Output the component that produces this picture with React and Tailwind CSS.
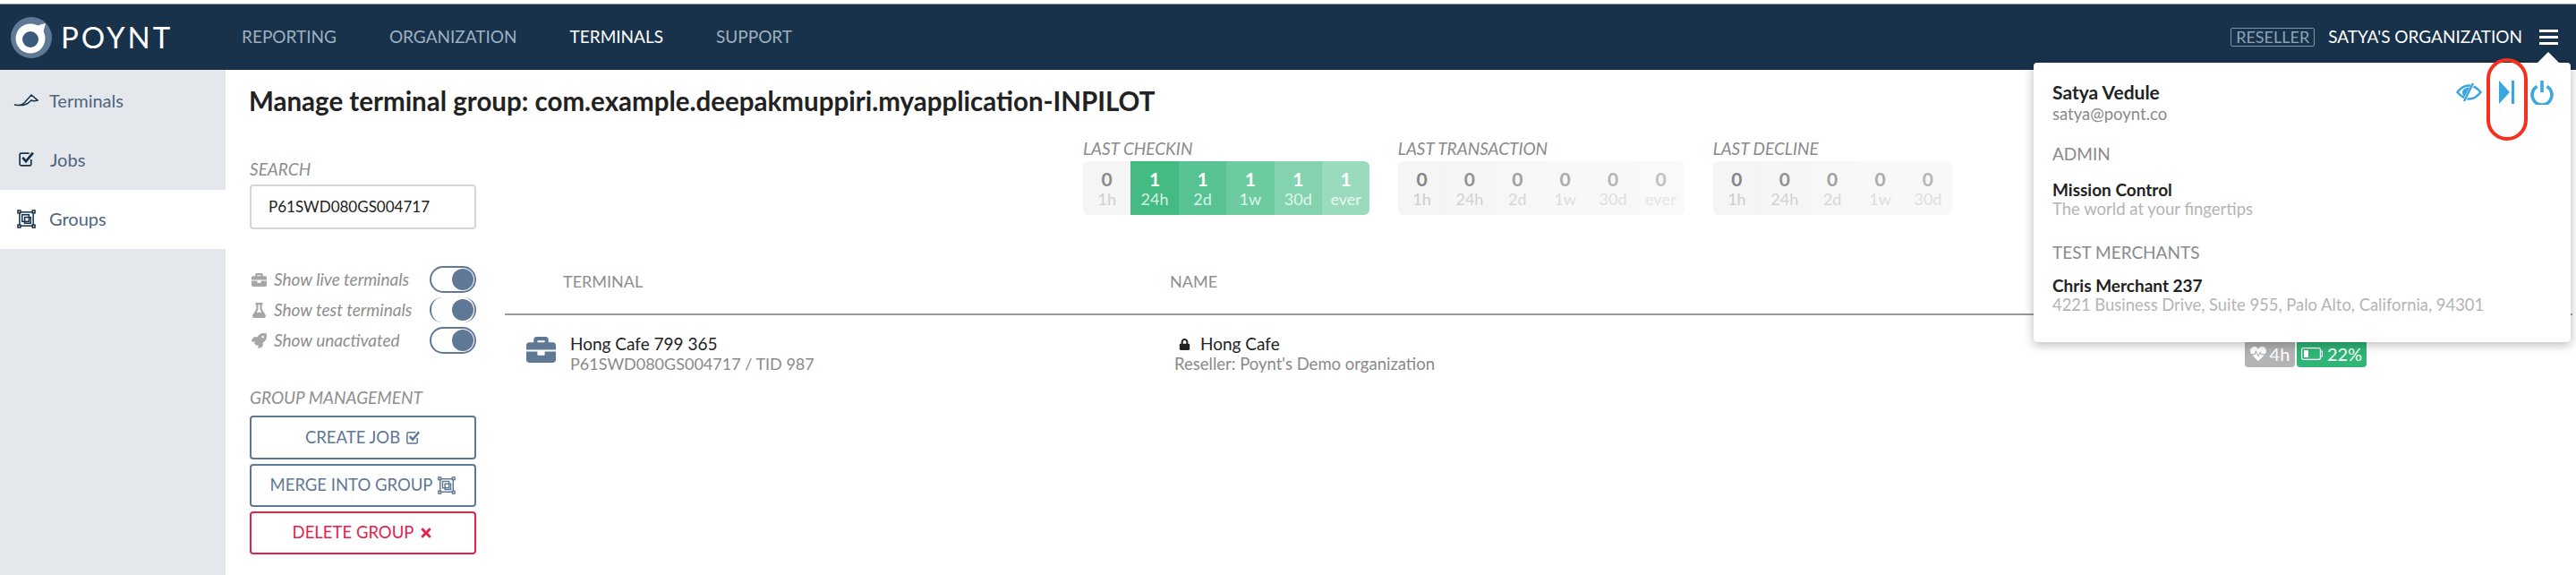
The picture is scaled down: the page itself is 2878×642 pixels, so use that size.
import React from "react";
import { FaBriefcase, FaFlask, FaRocket, FaTimes, FaLock, FaHeartbeat } from "react-icons/fa";

const font = "font-['Lato','Noto_Sans',sans-serif]";

function Logo() {
  return (
    <svg width="46" height="46" viewBox="0 0 46 46" className="shrink-0">
      <circle cx="23" cy="23" r="23" fill="#5f7896" />
      <circle cx="22" cy="24" r="16.5" fill="#ffffff" />
      <path d="M28 10 L39 7 L36 18 Z" fill="#ffffff" />
      <circle cx="22" cy="25" r="9" fill="#3a5a7c" />
    </svg>
  );
}

function GroupIcon({ size = 21, color = "#17324a" }) {
  return (
    <svg width={size} height={size} viewBox="0 0 22 22" fill="none" stroke={color} strokeWidth="1.6">
      <rect x="3" y="3" width="16" height="16" />
      <rect x="6" y="6" width="8" height="8" />
      <rect x="9" y="9" width="7" height="7" />
      <rect x="1" y="1" width="3" height="3" fill="#fff" />
      <rect x="18" y="1" width="3" height="3" fill="#fff" />
      <rect x="1" y="18" width="3" height="3" fill="#fff" />
      <rect x="18" y="18" width="3" height="3" fill="#fff" />
    </svg>
  );
}

function CheckIcon({ size = 18, color = "#17324a" }) {
  return (
    <svg width={size} height={size} viewBox="0 0 18 18" fill="none" stroke={color}>
      <path d="M14 9.5 V14.5 A1.5 1.5 0 0 1 12.5 16 H3.5 A1.5 1.5 0 0 1 2 14.5 V4.5 A1.5 1.5 0 0 1 3.5 3 H12" strokeWidth="1.6" />
      <path d="M5 7.5 L8.5 11.5 L16 2.5" strokeWidth="2.6" />
    </svg>
  );
}

function PenIcon() {
  return (
    <svg width="28" height="16" viewBox="0 0 28 16" fill="none" stroke="#17324a" strokeWidth="1.5">
      <path d="M1 13 C6 14 9 14 12 11 L20 2 L27 8 C24 9 22 9 20 8 C16 12 12 15 1 13 Z" />
    </svg>
  );
}

function EyeIcon() {
  return (
    <svg width="29" height="22" viewBox="0 0 29 22" fill="none" stroke="#3aa7df">
      <path d="M1.5 11 C6 5 10 3.5 14.5 3.5 C19 3.5 23.5 6 27.5 11 C23.5 16 19 18.5 14.5 18.5 C10 18.5 6 16 1.5 11 Z" strokeWidth="2.6" />
      <path d="M7 11 C7 7.5 11 5.5 16 5.5 L10 17 C8 15.5 7 13.5 7 11 Z" fill="#3aa7df" stroke="none" />
      <path d="M19.5 1 L9 21" strokeWidth="3.5" stroke="#ffffff" />
      <path d="M19 1 L9 21" strokeWidth="2.4" />
    </svg>
  );
}

function SkipIcon() {
  return (
    <svg width="17" height="26" viewBox="0 0 17 26" fill="#3aa7df">
      <path d="M0 0 L12 13 L0 26 Z" />
      <rect x="14" y="0" width="3" height="26" />
    </svg>
  );
}

function PowerIcon() {
  return (
    <svg width="26" height="27" viewBox="0 0 26 27" fill="none" stroke="#3aa7df" strokeWidth="3.6">
      <path d="M7.5 6.5 A 11 11 0 1 0 18.5 6.5" />
      <path d="M13 0 V13" />
    </svg>
  );
}

function BatteryIcon() {
  return (
    <svg width="24" height="14" viewBox="0 0 24 14" fill="none" stroke="#ffffff" strokeWidth="1.2">
      <rect x="0.6" y="0.6" width="20.8" height="12.8" rx="2" />
      <rect x="3" y="3" width="5" height="8" fill="#ffffff" stroke="none" />
      <path d="M21.5 4 H23.4 V10 H21.5" />
    </svg>
  );
}

function Toggle({ thin }) {
  return (
    <div
      className={
        thin
          ? "w-[52px] h-[28px] rounded-full border-x-2 border-y-0 border-x-[#5f7896] flex items-center justify-end pr-[1px]"
          : "w-[52px] h-[30px] rounded-full border-2 border-[#5f7896] flex items-center justify-end pr-[1px]"
      }
    >
      <div className="w-[24px] h-[24px] rounded-full bg-[#5f7896]" />
    </div>
  );
}

function ToggleRow({ icon, label, thin }) {
  return (
    <div className="flex items-center h-[34px]">
      <div className="w-[27px] flex justify-start pl-[2px] text-[#a6a6a6]">{icon}</div>
      <div className="flex-1 italic text-[19px] text-[#8e8e8e] whitespace-nowrap">{label}</div>
      <Toggle thin={thin} />
    </div>
  );
}

function Stat({ title, cells }) {
  return (
    <div>
      <div className="italic text-[19px] text-[#8a8a8a] h-[24px] leading-[24px] whitespace-nowrap">{title}</div>
      <div className="flex h-[60px] rounded-[6px] overflow-hidden mt-[2px]">
        {cells.map((c) => (
          <div key={c.label} className={`w-[53.4px] flex flex-col items-center justify-center ${c.bg}`}>
            <div className={`text-[21px] font-bold leading-[25px] ${c.num}`}>{c.value}</div>
            <div className={`text-[18px] leading-[21px] ${c.sub}`}>{c.label}</div>
          </div>
        ))}
      </div>
    </div>
  );
}

const checkin = [
  { label: "1h", value: 0, bg: "bg-[#f5f5f5]", num: "text-[#8a8a8a]", sub: "text-[#cfcfcf]" },
  { label: "24h", value: 1, bg: "bg-[#43bb83]", num: "text-white", sub: "text-[#d5f1e3]" },
  { label: "2d", value: 1, bg: "bg-[#58c392]", num: "text-white", sub: "text-[#d9f3e6]" },
  { label: "1w", value: 1, bg: "bg-[#6dcba0]", num: "text-white", sub: "text-[#def5ea]" },
  { label: "30d", value: 1, bg: "bg-[#82d3ae]", num: "text-white", sub: "text-[#e3f6ed]" },
  { label: "ever", value: 1, bg: "bg-[#99dbbc]", num: "text-white", sub: "text-[#e8f8f0]" },
];

const grey = [
  { label: "1h", value: 0, bg: "bg-[#f5f5f5]", num: "text-[#858585]", sub: "text-[#cdcdcd]" },
  { label: "24h", value: 0, bg: "bg-[#f6f6f6]", num: "text-[#939393]", sub: "text-[#d2d2d2]" },
  { label: "2d", value: 0, bg: "bg-[#f7f7f7]", num: "text-[#a0a0a0]", sub: "text-[#d8d8d8]" },
  { label: "1w", value: 0, bg: "bg-[#f8f8f8]", num: "text-[#ababab]", sub: "text-[#dddddd]" },
  { label: "30d", value: 0, bg: "bg-[#f8f8f8]", num: "text-[#b5b5b5]", sub: "text-[#e0e0e0]" },
  { label: "ever", value: 0, bg: "bg-[#f9f9f9]", num: "text-[#c0c0c0]", sub: "text-[#e5e5e5]" },
];

function UserMenu() {
  return (
    <div className="absolute left-[2272px] top-[70px] w-[600px] h-[312px] bg-white rounded-[4px] shadow-[0_3px_12px_rgba(0,0,0,0.28)] pl-[21px] pr-[19px] pt-[21px] z-10">
      <div className="absolute right-[13px] top-[-12px] w-0 h-0 border-x-[12px] border-x-transparent border-b-[12px] border-b-white" />
      <div className="flex items-center justify-between h-[24px]">
        <div className="text-[21px] font-bold text-[#222222] leading-[24px]">Satya Vedule</div>
        <div className="flex items-center">
          <EyeIcon />
          <div className="ml-[19px]"><SkipIcon /></div>
          <div className="ml-[18px]"><PowerIcon /></div>
        </div>
      </div>
      <div className="text-[18.5px] text-[#8a8a8a] leading-[24px]">satya@poynt.co</div>
      <div className="mt-[21px] text-[19px] text-[#8a8a8a] leading-[24px]">ADMIN</div>
      <div className="mt-[17px] text-[19px] font-bold text-[#222222] leading-[21px]">Mission Control</div>
      <div className="text-[18.5px] text-[#b4b4b4] leading-[22px]">The world at your fingertips</div>
      <div className="mt-[26px] text-[19px] text-[#8a8a8a] leading-[24px]">TEST MERCHANTS</div>
      <div className="mt-[14px] text-[19px] font-bold text-[#222222] leading-[21px]">Chris Merchant 237</div>
      <div className="text-[18.4px] text-[#b4b4b4] leading-[22px] whitespace-nowrap">4221 Business Drive, Suite 955, Palo Alto, California, 94301</div>
      <div className="absolute left-[506px] top-[-5px] w-[46px] h-[92px] rounded-full border-[4px] border-[#f5301e]" />
    </div>
  );
}

export default function App() {
  return (
    <div className={`${font} w-[2878px] h-[642px] overflow-hidden bg-white flex flex-col relative`}>
      <div className="h-[5px] bg-white border-b border-[#9a9a9a] shrink-0" />
      <header className="h-[73px] shrink-0 bg-[#17324a] flex items-center pl-[12px] pr-[20px]">
        <Logo />
        <div className="ml-[10px] w-[202px] text-[33px] leading-none text-white tracking-[3px]">POYNT</div>
        <nav className="flex gap-[59px] text-[19px] text-[#9fb0bf]">
          <span>REPORTING</span>
          <span>ORGANIZATION</span>
          <span className="text-white">TERMINALS</span>
          <span>SUPPORT</span>
        </nav>
        <div className="ml-auto flex items-center text-[19px]">
          <span className="w-[94px] h-[21px] flex items-center justify-center border border-[#7d93a8] text-[#8ea2b5] rounded-[2px] text-[18px]">RESELLER</span>
          <span className="ml-[15px] text-white">SATYA'S ORGANIZATION</span>
          <div className="ml-[19px] flex flex-col gap-[4px] w-[21px]">
            <div className="h-[3px] bg-white" />
            <div className="h-[3px] bg-white" />
            <div className="h-[3px] bg-white" />
          </div>
        </div>
      </header>

      <div className="flex flex-1">
        <aside className="w-[252px] shrink-0 bg-[#e4e7eb] text-[20px] text-[#4d6580]">
          <div className="h-[68px] flex items-center pl-[15px] gap-[12px]"><PenIcon /><span>Terminals</span></div>
          <div className="h-[66px] flex items-center pl-[20px] gap-[17px] pb-[3px]"><CheckIcon size={19} /><span>Jobs</span></div>
          <div className="h-[66px] flex items-center pl-[19px] gap-[15px] bg-white pb-[2px]"><GroupIcon /><span>Groups</span></div>
        </aside>

        <main className="flex-1 pl-[27px] pr-[4px]">
          <h1 className="h-[70px] -ml-[1px] flex items-center text-[29.5px] font-bold text-[#222222] whitespace-nowrap">Manage terminal group: com.example.deepakmuppiri.myapplication-INPILOT</h1>
          <div className="flex">
            <div className="w-[253px] shrink-0">
              <div className="italic text-[19px] text-[#8e8e8e] mt-[27px] h-[31px]">SEARCH</div>
              <div className="h-[50px] border-2 border-[#d6d6d6] rounded-[4px] flex items-center pl-[19px] text-[17px] text-[#222]">P61SWD080GS004717</div>
              <div className="mt-[39px]">
                <ToggleRow icon={<FaBriefcase size={17} />} label="Show live terminals" />
                <ToggleRow icon={<FaFlask size={17} />} label="Show test terminals" thin />
                <ToggleRow icon={<FaRocket size={17} />} label="Show unactivated" />
              </div>
              <div className="italic text-[19px] text-[#8e8e8e] mt-[33px] h-[31px] whitespace-nowrap">GROUP MANAGEMENT</div>
              <div className="flex flex-col gap-[5px] mt-[3px] text-[18.5px]">
                <button className="h-[49px] border-2 border-[#5f7896] rounded-[4px] text-[#5f7896] flex items-center justify-center gap-[6px]">CREATE JOB <CheckIcon size={17} color="#5f7896" /></button>
                <button className="h-[48px] border-2 border-[#5f7896] rounded-[4px] text-[#5f7896] flex items-center justify-center gap-[6px] whitespace-nowrap">MERGE INTO GROUP <GroupIcon size={20} color="#5f7896" /></button>
                <button className="h-[48px] border-2 border-[#e4234b] rounded-[4px] text-[#e4234b] flex items-center justify-center gap-[6px]">DELETE GROUP <FaTimes size={16} /></button>
              </div>
            </div>

            <div className="flex-1 pl-[32px]">
              <div className="flex gap-[31.5px] pl-[646px] mt-[6px]">
                <Stat title="LAST CHECKIN" cells={checkin} />
                <Stat title="LAST TRANSACTION" cells={grey} />
                <Stat title="LAST DECLINE" cells={grey.slice(0, 5)} />
              </div>
              <div className="mt-[61px] border-b-2 border-[#9a9a9a] h-[51px] flex text-[18px] text-[#8e8e8e] pl-[65px]">
                <span className="w-[678px]">TERMINAL</span>
                <span>NAME</span>
              </div>
              <div className="flex pt-[21px] pl-[24px]">
                <div className="w-[49px] pt-[1px]"><FaBriefcase size={33} color="#5f7896" /></div>
                <div className="w-[675px] leading-[22px]">
                  <div className="text-[19px] text-[#222]">Hong Cafe 799 365</div>
                  <div className="text-[18px] text-[#8a8a8a]">P61SWD080GS004717 / TID 987</div>
                </div>
                <div className="leading-[22px]">
                  <div className="text-[19px] text-[#222] flex items-center pl-[5px] gap-[11px]"><FaLock size={13} />Hong Cafe</div>
                  <div className="text-[18.5px] text-[#8a8a8a]">Reseller: Poynt's Demo organization</div>
                </div>
                <div className="ml-auto mr-[230px] mt-[7px] flex gap-[2px] h-[30px] text-white text-[20px]">
                  <div className="w-[56px] bg-[#b3b3b3] rounded-[4px] flex items-center justify-center gap-[4px]"><FaHeartbeat size={18} />4h</div>
                  <div className="w-[78px] bg-[#2fb576] rounded-[4px] flex items-center justify-center gap-[5px]"><BatteryIcon />22%</div>
                </div>
              </div>
            </div>
          </div>
        </main>
      </div>
      <UserMenu />
    </div>
  );
}
